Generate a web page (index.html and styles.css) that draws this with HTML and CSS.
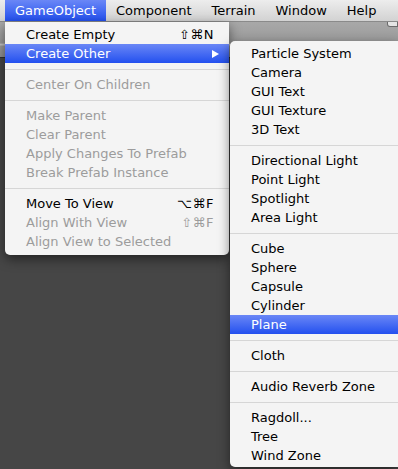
FILE: index.html
```html
<!DOCTYPE html>
<html lang="en">
<head>
    <meta charset="UTF-8">
    <meta name="viewport" content="width=device-width, initial-scale=1.0">
    <title>GameObject Menu</title>
    <link rel="stylesheet" href="styles.css">
</head>
<body>

    <!-- Menu Bar -->
    <div class="menubar">
        <div class="menubar-item active">GameObject</div>
        <div class="menubar-item">Component</div>
        <div class="menubar-item">Terrain</div>
        <div class="menubar-item">Window</div>
        <div class="menubar-item">Help</div>
    </div>

    <!-- Editor behind the menus -->
    <div class="workspace">
        <div class="toolbar">
            <div class="toolbar-knob"></div>
        </div>
        <div class="canvas"></div>
    </div>

    <!-- GameObject dropdown -->
    <div class="menu dropdown">
        <div class="menu-item">Create Empty <span class="shortcut">⇧⌘N</span></div>
        <div class="menu-item selected">Create Other
            <svg class="arrow" width="7" height="8" viewBox="0 0 7 8"><polygon points="0,0 7,4 0,8" fill="#fff"/></svg>
        </div>
        <div class="separator"></div>
        <div class="menu-item disabled">Center On Children</div>
        <div class="separator"></div>
        <div class="menu-item disabled">Make Parent</div>
        <div class="menu-item disabled">Clear Parent</div>
        <div class="menu-item disabled">Apply Changes To Prefab</div>
        <div class="menu-item disabled">Break Prefab Instance</div>
        <div class="separator"></div>
        <div class="menu-item">Move To View <span class="shortcut">⌥⌘F</span></div>
        <div class="menu-item disabled">Align With View <span class="shortcut">⇧⌘F</span></div>
        <div class="menu-item disabled">Align View to Selected</div>
    </div>

    <!-- Create Other submenu -->
    <div class="menu submenu">
        <div class="menu-item">Particle System</div>
        <div class="menu-item">Camera</div>
        <div class="menu-item">GUI Text</div>
        <div class="menu-item">GUI Texture</div>
        <div class="menu-item">3D Text</div>
        <div class="separator"></div>
        <div class="menu-item">Directional Light</div>
        <div class="menu-item">Point Light</div>
        <div class="menu-item">Spotlight</div>
        <div class="menu-item">Area Light</div>
        <div class="separator"></div>
        <div class="menu-item">Cube</div>
        <div class="menu-item">Sphere</div>
        <div class="menu-item">Capsule</div>
        <div class="menu-item">Cylinder</div>
        <div class="menu-item selected">Plane</div>
        <div class="separator"></div>
        <div class="menu-item">Cloth</div>
        <div class="separator"></div>
        <div class="menu-item">Audio Reverb Zone</div>
        <div class="separator"></div>
        <div class="menu-item">Ragdoll...</div>
        <div class="menu-item">Tree</div>
        <div class="menu-item">Wind Zone</div>
    </div>

</body>
</html>
```

FILE: styles.css
```css
/* Global Reset */
* {
    margin: 0;
    padding: 0;
    box-sizing: border-box;
}

body {
    font-family: 'DejaVu Sans', sans-serif;
    font-size: 13px;
    width: 398px;
    height: 469px;
    overflow: hidden;
    position: relative;
    display: flex;
    flex-direction: column;
    background: #464646;
    color: #000;
}

/* Top menu bar */
.menubar {
    height: 22px;
    display: flex;
    padding-left: 5px;
    background: linear-gradient(#ededed, #d2d2d2);
    border-bottom: 1px solid #8a8a8a;
}

.menubar-item {
    padding: 0 10px;
    line-height: 21px;
}

.menubar-item.active {
    color: #fff;
    background: linear-gradient(#6a87f6, #2350ef);
}

/* Editor behind */
.workspace {
    flex: 1;
    display: flex;
    flex-direction: column;
}

.toolbar {
    height: 36px;
    display: flex;
    justify-content: flex-end;
    background: linear-gradient(#a8a8a8 0, #9a9a9a 60%, #c9c9c9 64%, #9c9c9c 70%, #8e8e8e 100%);
    border-bottom: 1px solid #2e2e2e;
}

.toolbar-knob {
    width: 11px;
    height: 5px;
    background: #e4e4e4;
    border: 1px solid #6a6a6a;
    border-top: none;
    border-radius: 0 0 0 3px;
}

.canvas {
    flex: 1;
    background: #464646;
}

/* Menus */
.menu {
    position: absolute;
    background: #f4f4f4;
    box-shadow: 0 4px 12px rgba(0, 0, 0, 0.5);
}

.dropdown {
    left: 5px;
    top: 22px;
    width: 224px;
    padding: 3px 0 4px;
    border-radius: 0 0 5px 5px;
}

/* runs to the right edge of the window */
.submenu {
    left: 230px;
    top: 41px;
    width: 168px;
    padding: 3px 0 2px;
    border-radius: 5px 0 0 5px;
}

.menu-item {
    height: 19px;
    line-height: 19px;
    padding: 0 15px 0 21px;
    display: flex;
    justify-content: space-between;
    align-items: center;
    white-space: nowrap;
}

.menu-item.selected {
    color: #fff;
    background: linear-gradient(#6a87f6, #2350ef);
    padding-right: 10px;
}

.menu-item.disabled {
    color: #9c9c9c;
}

.shortcut {
    letter-spacing: 0.5px;
}

.separator {
    height: 1px;
    background: #d6d6d6;
    margin: 6px 0 5px;
}
```
